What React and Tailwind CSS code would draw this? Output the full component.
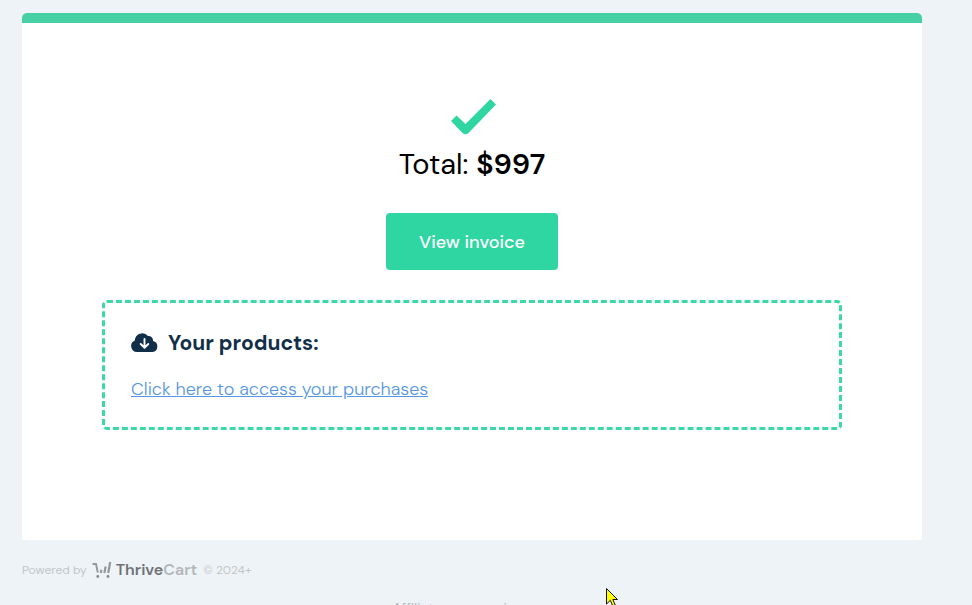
function CheckIcon() {
  return (
    <svg viewBox="0 0 48 36" className="w-12 h-9" fill="#30d6a2" aria-hidden="true">
      <path d="M3 22 L8.5 16.5 L17.5 25 L42.5 0 L48 5.5 L20.5 34 Q17.5 36.5 14.5 34 Z" />
    </svg>
  );
}

function CloudIcon() {
  return (
    <svg viewBox="0 0 27 21" className="w-[27px] h-[21px]" aria-hidden="true">
      <path
        d="M6 19 A6 6 0 0 1 3.8 7.5 A7.5 7.5 0 0 1 17 3 A4.5 4.5 0 0 1 22 8 A5.6 5.6 0 0 1 21.5 19 Z"
        fill="#122f49"
      />
      <path
        d="M13.5 6 V14.5 M9.7 11 L13.5 14.7 L17.3 11"
        fill="none"
        stroke="#fff"
        strokeWidth="1.9"
        strokeLinecap="round"
        strokeLinejoin="round"
      />
    </svg>
  );
}

function CartLogo() {
  return (
    <svg viewBox="0 0 20 18" className="w-5 h-[18px]" fill="none" stroke="#95989a" aria-hidden="true">
      <path d="M0.5 3 H4 L5.8 11.5" strokeWidth="1.9" />
      <path d="M8.8 12 L9.4 8.8 M12.4 12 L13.6 5.5 M16.2 12 L18.2 1" strokeWidth="2.2" />
      <circle cx="5.8" cy="15.5" r="1.4" fill="#85888b" stroke="none" />
      <circle cx="16" cy="15.5" r="1.4" fill="#85888b" stroke="none" />
    </svg>
  );
}

function Pointer() {
  return (
    <svg viewBox="0 0 12 19" className="fixed left-[606px] top-[588px] w-3 h-[19px]" aria-hidden="true">
      <path
        d="M0.5 0.5 V16 L4.3 12.3 L6.8 18 L9.2 17 L6.8 11.5 H11.5 Z"
        fill="#ffff00"
        stroke="#111"
      />
    </svg>
  );
}

export default function App() {
  return (
    <div className="h-screen overflow-hidden bg-[#eef3f7] pt-[13px] pl-[22px] pr-[50px] font-['DM_Sans','Open_Sans',sans-serif]">
      <main className="max-w-[900px] bg-white border-t-10 border-[#47d0a3] rounded-t-[5px] px-20 pt-[76px] pb-[110px]">
        <div className="flex flex-col items-center">
          <CheckIcon />
          <p className="mt-2 text-[29px] leading-[42px] text-black">
            Total: <strong className="font-semibold">$997</strong>
          </p>
          <button className="mt-7 mb-[30px] h-[57px] w-[172px] rounded bg-[#30d6a2] pt-px text-[18px] font-medium text-white">
            View invoice
          </button>
        </div>

        <section className="rounded-[5px] border-3 border-dashed border-[#3dd8a7] px-[26px] pt-6 pb-[25px]">
          <h2 className="flex items-center gap-[10px] text-[21px] leading-8 font-bold text-[#122f49]">
            <CloudIcon />
            Your products:
          </h2>
          <a href="#" className="mt-[18px] block text-[18px] leading-[25px] font-light text-[#5496e2] underline">
            Click here to access your purchases
          </a>
        </section>
      </main>

      <footer className="max-w-[900px] text-xs leading-5 text-[#c3c5c7]">
        <div className="mt-5 flex items-center">
          <span>Powered by</span>
          <a href="#" className="ml-[5px] mr-[6px] flex items-center gap-1 text-[16px] font-semibold">
            <CartLogo />
            <span className="text-[#b4b7ba]"><span className="text-[#6f7275]">Thrive</span>Cart</span>
          </a>
          <span>© 2024+</span>
        </div>
        <p className="mt-[18px] text-center text-sm text-[#b4b7ba]">Affiliate program income</p>
      </footer>

      <Pointer />
    </div>
  );
}
